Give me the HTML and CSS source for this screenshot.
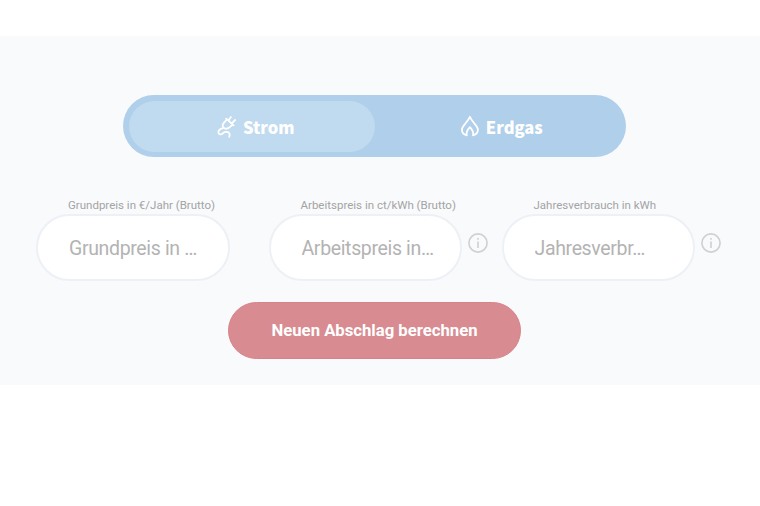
FILE: index.html
```html
<!DOCTYPE html>
<html lang="de">

<head>
  <meta charset="UTF-8">
  <title>Abschlagsrechner</title>
  <link rel="stylesheet" href="styles.css">
</head>

<body>
  <form class="calculator">
    <div class="tabs">
      <button type="button" class="tab active">
        <svg class="tab-icon" viewBox="0 0 20 24">
          <path d="M9.2 3.6L16.6 10.4M10 4.4L7 7.6C5.2 9.6 5.2 11.4 6.6 12.6C8 14 10.4 13.9 12.2 12.6L15.6 9.6M11.8 5L13.9 2M15 8L18.2 5M6.4 12.8C3 13.8 1.2 15.4 1.4 17.4C1.8 20 4.4 20 6 18.2C7.6 16.6 11.6 16.4 12.5 18.6C12.9 19.8 12.6 21 12.2 21.8" />
        </svg>
        <span>Strom</span>
      </button>
      <button type="button" class="tab">
        <svg class="tab-icon" viewBox="0 0 20 24">
          <path d="M6.8 20.4C3.6 19.8 1.9 17.6 1.9 14.6C1.9 10.4 7.6 7.8 9.9 1.8C12.2 7.8 17.9 10.4 17.9 14.6C17.9 17.6 16.2 19.8 13 20.4C14.2 17 12.3 14.8 9.9 12.2C7.5 14.8 5.6 17 6.8 20.4Z" />
        </svg>
        <span>Erdgas</span>
      </button>
    </div>

    <div class="fields">
      <div class="field">
        <label for="grundpreis">Grundpreis in €/Jahr (Brutto)</label>
        <input id="grundpreis" type="text" placeholder="Grundpreis in …">
      </div>
      <div class="field">
        <label for="arbeitspreis">Arbeitspreis in ct/kWh (Brutto)</label>
        <input id="arbeitspreis" type="text" placeholder="Arbeitspreis in…">
      </div>
      <svg class="info" viewBox="0 0 20 20">
        <circle cx="10" cy="10" r="9.1" />
        <path d="M10 8.4V15M10 5V6.8" />
      </svg>
      <div class="field">
        <label for="verbrauch">Jahresverbrauch in kWh</label>
        <input id="verbrauch" type="text" placeholder="Jahresverbr…">
      </div>
      <svg class="info" viewBox="0 0 20 20">
        <circle cx="10" cy="10" r="9.1" />
        <path d="M10 8.4V15M10 5V6.8" />
      </svg>
    </div>

    <button type="button" class="submit">Neuen Abschlag berechnen</button>
  </form>
</body>

</html>
```

FILE: styles.css
```css
* {
  box-sizing: border-box;
}

body {
  margin: 0;
  padding-top: 36px;
  background: #fff;
  font-family: Roboto, sans-serif;
}

.calculator {
  height: 349px;
  padding: 59px 0 0 36px;
  background: #f9fafc;
}

button {
  border: none;
  font-family: inherit;
  color: #fff;
}

.tabs {
  display: flex;
  width: 503px;
  height: 62px;
  margin-left: 87px;
  padding: 6px 6px 5px;
  border-radius: 31px;
  background: #b0cfea;
}

.tab {
  display: flex;
  flex: 1;
  align-items: center;
  justify-content: center;
  gap: 6px;
  padding: 1px 0 0 8px;
  border-radius: 26px;
  background: none;
  font-family: "Noto Sans CJK SC", sans-serif;
  font-size: 16.5px;
  font-weight: 900;
  line-height: 24px;
}

.tab.active {
  background: #c0daef;
}

.tab-icon {
  width: 20px;
  height: 24px;
  fill: none;
  stroke: #fff;
  stroke-width: 1.8;
  stroke-linecap: round;
  stroke-linejoin: round;
}

.fields {
  display: flex;
  margin-top: 41px;
}

.field {
  width: 193.5px;
}

.field + .field {
  margin-left: 39px;
}

.field label {
  display: block;
  height: 16px;
  padding-left: 32px;
  font-size: 11.5px;
  line-height: 15px;
  white-space: nowrap;
  color: #a3a4a4;
}

.field input {
  display: block;
  width: 100%;
  height: 67px;
  padding: 2px 20px 0 31px;
  border: 2px solid #edf1f5;
  border-radius: 34px;
  background: #fff;
  font-family: inherit;
  font-size: 19.5px;
  letter-spacing: -0.35px;
}

.field input::placeholder {
  color: #b3b3b3;
}

.info {
  width: 20px;
  height: 20px;
  margin: 35px 13.5px 0 6px;
  fill: none;
  stroke: #cfd0d1;
  stroke-width: 1.6;
}

.submit {
  display: block;
  width: 293px;
  height: 57px;
  margin: 21px 0 0 192px;
  border: 1px solid #d8838a;
  border-radius: 29px;
  background: #d88b90;
  font-size: 16.7px;
  font-weight: 700;
}
```
